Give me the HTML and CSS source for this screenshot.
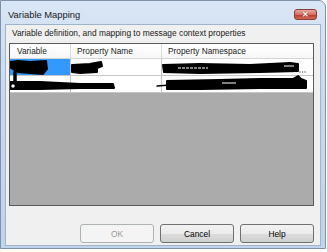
FILE: index.html
```html
<!DOCTYPE html>
<html>
<head>
    <meta charset="UTF-8">
    <title>Variable Mapping</title>
    <link rel="stylesheet" href="styles.css">
</head>
<body>
    <div class="window">
        <div class="titlebar">
            <span class="title">Variable Mapping</span>
            <div class="close-btn">&#x2715;</div>
        </div>

        <div class="client">
            <p class="description">Variable definition, and mapping to message context properties</p>

            <div class="grid">
                <div class="grid-header">
                    <div class="col col-var">Variable</div>
                    <div class="col col-name">Property Name</div>
                    <div class="col col-ns">Property Namespace</div>
                </div>
                <div class="grid-row">
                    <div class="col col-var selected"></div>
                    <div class="col col-name"></div>
                    <div class="col col-ns"></div>
                </div>
                <div class="grid-row">
                    <div class="col col-var"></div>
                    <div class="col col-name"></div>
                    <div class="col col-ns"></div>
                </div>
                <div class="grid-empty"></div>

                <!-- marker strokes over the row values -->
                <svg class="scribbles" width="303" height="52" viewBox="10 44 303 52">
                    <g fill="#000" stroke="#000" stroke-width="2" stroke-linejoin="round" stroke-linecap="round">
                        <path d="M10 62 L18 61 L30 62 L46 61 L47 69 L43 74 L30 73 L18 72 L11 68 Z"/>
                        <path d="M15 72 L15 82" stroke-width="3.5" fill="none"/>
                        <path d="M72 65 L90 64 L95 63 L101 62 L102 66 L97 68 L97 72 L80 73 L72 72 Z"/>
                        <path d="M163 65 L200 64 L250 65 L290 63 L298 64 L298 71 L260 72 L200 73 L164 72 Z"/>
                        <path d="M10 82 L40 82 L80 84 L113 84 L114 88 L80 88 L40 89 L10 89 Z"/>
                        <path d="M157 86 L170 85" stroke-width="1.5" fill="none"/>
                        <path d="M167 81 L220 80 L260 79 L293 79 L298 76 L301 79 L306 81 L306 88 L260 88 L200 89 L167 89 Z"/>
                    </g>
                    <circle cx="13" cy="86" r="2.5" fill="#fff" stroke="#000" stroke-width="1.5"/>
                    <g stroke="#fff" stroke-width="1" fill="none">
                        <path d="M178 68 L208 68" stroke-dasharray="3 1"/>
                        <path d="M284 66 L294 66"/>
                        <path d="M222 83 L236 83"/>
                    </g>
                    <g fill="#555">
                        <circle cx="300" cy="72" r="0.7"/>
                        <circle cx="302.5" cy="72" r="0.7"/>
                        <circle cx="305" cy="72" r="0.7"/>
                    </g>
                </svg>
            </div>

            <div class="buttons">
                <button class="btn" disabled>OK</button>
                <button class="btn">Cancel</button>
                <button class="btn">Help</button>
            </div>
        </div>
    </div>
</body>
</html>
```

FILE: styles.css
```css
html, body {
    margin: 0;
    padding: 0;
    background-color: #fff;
}

body {
    font-family: "Liberation Sans", Arial, sans-serif;
    color: #000;
}

.window {
    box-sizing: border-box;
    width: 326px;
    height: 249px;
    border: 1px solid #7f92a8;
    border-top-right-radius: 7px;
    background: linear-gradient(#d9e6f5, #c6d9ef 40%, #bfd4ed);
    padding: 0 4px 2px 4px;
    display: flex;
    flex-direction: column;
}

.titlebar {
    height: 23px;
    box-sizing: border-box;
    padding: 4px 4px 0 3px;
    display: flex;
    align-items: center;
    justify-content: space-between;
}

.title {
    font-size: 9.4px;
    color: #1a1a1a;
}

.close-btn {
    width: 23px;
    height: 11px;
    box-sizing: border-box;
    border: 1px solid #8b3b33;
    border-radius: 3px;
    background: linear-gradient(#e6aa9f, #d4705f 50%, #c0392b 55%, #cf6a56);
    color: #fff;
    font-size: 8px;
    font-weight: bold;
    line-height: 9px;
    text-align: center;
    text-shadow: 0 0 1px #5a1a12;
}

.client {
    box-sizing: border-box;
    height: 222px;
    border: 1px solid #9fb3ca;
    background-color: #f0f0f0;
    padding: 0 5px 0 3px;
}

.description {
    margin: 0 0 0 3px;
    height: 18px;
    line-height: 17px;
    font-size: 8.4px;
    color: #1a1a1a;
}

.grid {
    position: relative;
    box-sizing: border-box;
    width: 305px;
    height: 163px;
    border: 1px solid #5a5a5a;
    background-color: #ababab;
    display: flex;
    flex-direction: column;
    font-size: 8.3px;
}

.grid-header,
.grid-row {
    display: grid;
    grid-template-columns: 61px 91px 1fr;
    background-color: #fff;
}

.grid-header {
    height: 15px;
    box-sizing: border-box;
    border-bottom: 1px solid #d5d5d5;
    background: linear-gradient(#fff, #f7f7f7);
    line-height: 14px;
    color: #1a1a1a;
}

.grid-header .col {
    border-right: 1px solid #dcdcdc;
    padding-left: 6px;
}

.grid-header .col-var {
    padding-left: 7px;
}

.grid-header .col-ns {
    border-right: none;
}

.grid-row {
    height: 17px;
    box-sizing: border-box;
    border-bottom: 1px solid #c6c6c6;
}

.grid-row .col {
    border-right: 1px solid #c6c6c6;
}

.grid-row .col-ns {
    border-right: none;
}

.grid-row .selected {
    background-color: #3399ff;
}

.grid-empty {
    flex: 1;
}

.scribbles {
    position: absolute;
    left: 0;
    top: 0;
}

.buttons {
    display: flex;
    justify-content: flex-end;
    gap: 6px;
    margin-top: 18px;
    padding-right: 1px;
}

.btn {
    width: 74px;
    height: 19px;
    box-sizing: border-box;
    border: 1px solid #707070;
    border-radius: 3px;
    background: linear-gradient(#f2f2f2, #ebebeb 50%, #dddddd 51%, #cfcfcf);
    font-family: "Liberation Sans", Arial, sans-serif;
    font-size: 8.4px;
    color: #000;
    padding: 0;
}

.btn:disabled {
    border-color: #adb2b5;
    background: #f4f4f4;
    color: #9a9a9a;
}
```
